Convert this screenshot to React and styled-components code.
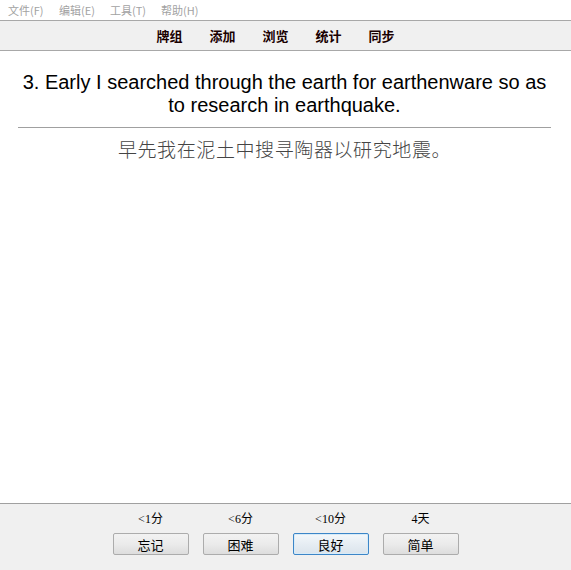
import styled, { createGlobalStyle } from "styled-components";

const GlobalStyle = createGlobalStyle`
  html, body {
    margin: 0;
    padding: 0;
    background: #ffffff;
  }
  #root {
    height: 570px;
  }
`;

const Window = styled.div`
  display: flex;
  flex-direction: column;
  height: 570px;
  background: #ffffff;
  font-family: "Noto Sans CJK SC", sans-serif;
`;

const MenuBar = styled.div`
  display: flex;
  align-items: center;
  height: 20px;
  padding-left: 8px;
  gap: 10px;
  background: #ffffff;
`;

const MenuItem = styled.span`
  font-size: 11px;
  line-height: 20px;
  color: #a2a2a2;
  width: 41px;
  white-space: nowrap;
`;

const Toolbar = styled.div`
  display: flex;
  justify-content: center;
  align-items: center;
  gap: 27px;
  height: 29px;
  padding-right: 20px;
  background: #f0f0f0;
  border-top: 1px solid #a8a8a8;
  border-bottom: 1px solid #a8a8a8;
`;

const ToolButton = styled.span`
  font-size: 13px;
  font-weight: 700;
  color: #1a0000;
  width: 26px;
  text-align: center;
  cursor: pointer;
`;

const Card = styled.div`
  flex: 1;
  display: flex;
  flex-direction: column;
  align-items: center;
  padding: 20px 20px 0 18px;
`;

const Question = styled.div`
  font-family: "Liberation Sans", Arial, sans-serif;
  font-size: 20px;
  line-height: 23px;
  color: #000000;
  text-align: center;
  width: 100%;
`;

const Divider = styled.hr`
  width: 100%;
  border: none;
  border-top: 1px solid #a0a0a0;
  margin: 10px 0 9px;
`;

const Answer = styled.div`
  font-family: "Noto Sans CJK SC", sans-serif;
  font-weight: 300;
  font-size: 19px;
  letter-spacing: 0.6px;
  line-height: 24px;
  color: #444444;
  text-align: center;
`;

const AnswerBar = styled.div`
  height: 67px;
  border-top: 1px solid #a0a0a0;
  background: #f0f0f0;
  display: grid;
  grid-template-columns: repeat(4, 76px);
  grid-template-rows: 14px 22px;
  column-gap: 14px;
  row-gap: 7px;
  justify-content: center;
  align-content: start;
  padding-top: 8px;
  box-sizing: border-box;
`;

const Due = styled.span`
  font-family: "Liberation Serif", "Noto Sans CJK SC", serif;
  font-size: 12px;
  line-height: 14px;
  color: #000000;
  text-align: center;
`;

const EaseButton = styled.button`
  height: 22px;
  padding: 0;
  font-family: "Noto Sans CJK SC", sans-serif;
  font-size: 13px;
  color: #000000;
  border: 1px solid ${(p) => (p.$focused ? "#3c86c8" : "#acacac")};
  border-radius: 2px;
  background: ${(p) =>
    p.$focused
      ? "linear-gradient(#f4f8fb 0%, #e6edf3 50%, #dbe4ec 100%)"
      : "linear-gradient(#f2f2f2 0%, #ebebeb 50%, #dddddd 100%)"};
  box-shadow: ${(p) => (p.$focused ? "inset 0 0 0 1px #d7ebf8" : "none")};
  cursor: pointer;
`;

const menus = ["文件(F)", "编辑(E)", "工具(T)", "帮助(H)"];
const tools = ["牌组", "添加", "浏览", "统计", "同步"];
const answers = [
  { due: "<1分", label: "忘记" },
  { due: "<6分", label: "困难" },
  { due: "<10分", label: "良好", focused: true },
  { due: "4天", label: "简单" },
];

export default function App() {
  return (
    <>
      <GlobalStyle />
      <Window>
        <MenuBar>
          {menus.map((m) => (
            <MenuItem key={m}>{m}</MenuItem>
          ))}
        </MenuBar>
        <Toolbar>
          {tools.map((t) => (
            <ToolButton key={t}>{t}</ToolButton>
          ))}
        </Toolbar>
        <Card>
          <Question>
            3. Early I searched through the earth for earthenware so as to
            research in earthquake.
          </Question>
          <Divider />
          <Answer>早先我在泥土中搜寻陶器以研究地震。</Answer>
        </Card>
        <AnswerBar>
          {answers.map((a) => (
            <Due key={a.due}>{a.due}</Due>
          ))}
          {answers.map((a) => (
            <EaseButton key={a.label} type="button" $focused={a.focused}>
              {a.label}
            </EaseButton>
          ))}
        </AnswerBar>
      </Window>
    </>
  );
}
